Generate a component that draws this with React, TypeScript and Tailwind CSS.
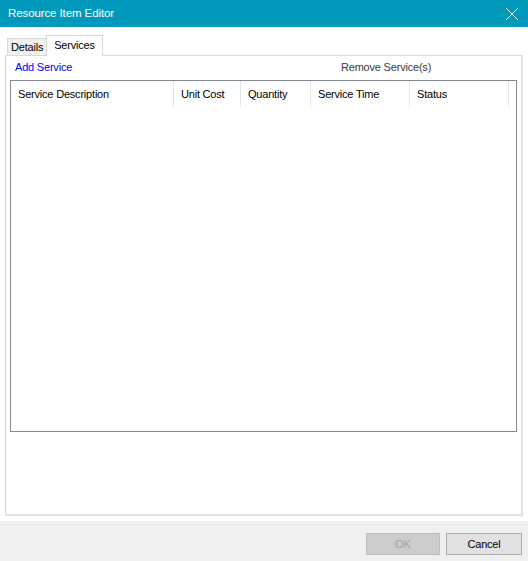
import { useState } from 'react';

const columns = [
  { label: 'Service Description', width: 163 },
  { label: 'Unit Cost', width: 67 },
  { label: 'Quantity', width: 70 },
  { label: 'Service Time', width: 99 },
  { label: 'Status', width: 99 },
];

export default function App() {
  const [tab, setTab] = useState<'details' | 'services'>('services');

  return (
    <div
      className="w-[528px] h-[561px] flex flex-col bg-white text-[11px] tracking-[-0.2px] text-black overflow-hidden"
      style={{ fontFamily: '"Liberation Sans", Arial, sans-serif' }}
    >
      {/* title bar */}
      <div className="h-[27px] bg-[#0099bc] flex items-center justify-between pl-[8px] pr-[9px] shrink-0">
        <span className="text-white text-[11.5px] leading-none tracking-[-0.1px]">Resource Item Editor</span>
        <svg width="14" height="14" viewBox="0 0 14 14" className="text-white">
          <path d="M1 1 L13 13 M13 1 L1 13" stroke="currentColor" strokeWidth="1" />
        </svg>
      </div>

      {/* tab area */}
      <div className="flex-1 flex flex-col pl-[5px] pr-[5px] pt-[7px] pb-[5px]">
        <div className="flex items-end h-[21px] pl-[2px]">
          <button
            onClick={() => setTab('details')}
            className={
              tab === 'details'
                ? 'h-[21px] px-[6px] border border-b-0 border-[#d9d9d9] bg-white'
                : 'h-[17px] px-[3px] border border-b-0 border-r-0 border-[#d9d9d9] bg-[#f0f0f0] leading-[16px]'
            }
          >
            Details
          </button>
          <button
            onClick={() => setTab('services')}
            className={
              tab === 'services'
                ? 'h-[21px] px-[7px] border border-b-0 border-[#d9d9d9] bg-white leading-[16px] -mb-px relative z-10 pb-[3px]'
                : 'h-[17px] px-[5px] border border-b-0 border-[#d9d9d9] bg-[#f0f0f0]'
            }
          >
            Services
          </button>
        </div>
        <div className="flex-1 border border-[#d9d9d9] border-r-2 border-r-[#e3e3e3] border-b-2 border-b-[#e3e3e3] bg-white flex flex-col px-[4px] pb-[82px]">
          <div className="flex items-center h-[24px] pl-[5px] pb-[2px]">
            <span className="w-[326px] shrink-0">
              <span className="text-[#0000ff] cursor-pointer">Add Service</span>
            </span>
            <span className="text-[#3c3c3c]">Remove Service(s)</span>
          </div>
          <div className="flex-1 border border-[#828790] bg-white">
            <div className="flex h-[26px]">
              {columns.map((c) => (
                <div
                  key={c.label}
                  style={{ width: c.width }}
                  className="h-full flex items-center pl-[7px] border-r border-[#e5e5e5] shrink-0"
                >
                  {c.label}
                </div>
              ))}
            </div>
          </div>
        </div>
      </div>

      {/* footer */}
      <div className="h-[40px] bg-[#f0f0f0] flex items-start justify-end gap-[6px] pr-[6px] pt-[12px] shrink-0">
        <button
          disabled
          className="w-[74px] h-[22px] bg-[#cccccc] border border-[#bfbfbf] text-[#a0a0a0]"
        >
          OK
        </button>
        <button className="w-[76px] h-[22px] bg-[#e1e1e1] border border-[#adadad]">Cancel</button>
      </div>
    </div>
  );
}
